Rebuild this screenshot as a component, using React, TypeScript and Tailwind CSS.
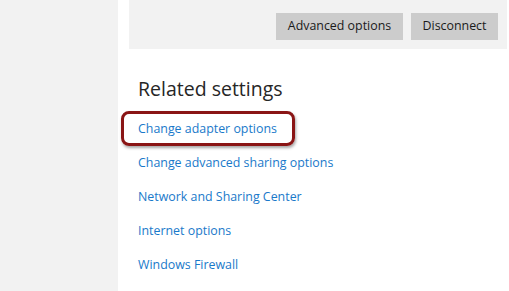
const links = [
  "Change adapter options",
  "Change advanced sharing options",
  "Network and Sharing Center",
  "Internet options",
  "Windows Firewall",
];

const App = () => {
  return (
    <div
      className="flex h-[291px] w-[509px] overflow-hidden bg-white text-[#262626]"
      style={{ fontFamily: '"Open Sans", "Noto Sans", sans-serif' }}
    >
      <div className="w-[118px] shrink-0 bg-[#f2f2f2]" />

      <div className="flex flex-1 flex-col pl-[11px] pr-[2px]">
        <div className="flex h-[49px] justify-end gap-[8px] bg-[#f2f2f2] pt-[13px] pr-[9px]">
          <button className="h-[27px] w-[127px] bg-[#cccccc] text-[12.4px] text-[#1a1a1a]">
            Advanced options
          </button>
          <button className="h-[27px] w-[87px] bg-[#cccccc] text-[12.4px] text-[#1a1a1a]">
            Disconnect
          </button>
        </div>

        <div className="flex flex-col pl-[9px] pt-[26px]">
          <h2 className="text-[19.5px] leading-[28px] text-[#262626]">Related settings</h2>

          <div className="mt-[7px] flex flex-col items-start">
            {links.map((label, i) => (
              <div key={label} className="relative h-[34px] leading-[34px]">
                {i === 0 && (
                  <div className="absolute top-[1px] -left-[17px] h-[35px] w-[174px] rounded-[8px] border-[3px] border-[#8a1515] shadow-[1px_2px_3px_rgba(0,0,0,0.35)]" />
                )}
                <a className="text-[12.4px] text-[#1979ca]">{label}</a>
              </div>
            ))}
          </div>
        </div>
      </div>
    </div>
  );
};

export default App;
